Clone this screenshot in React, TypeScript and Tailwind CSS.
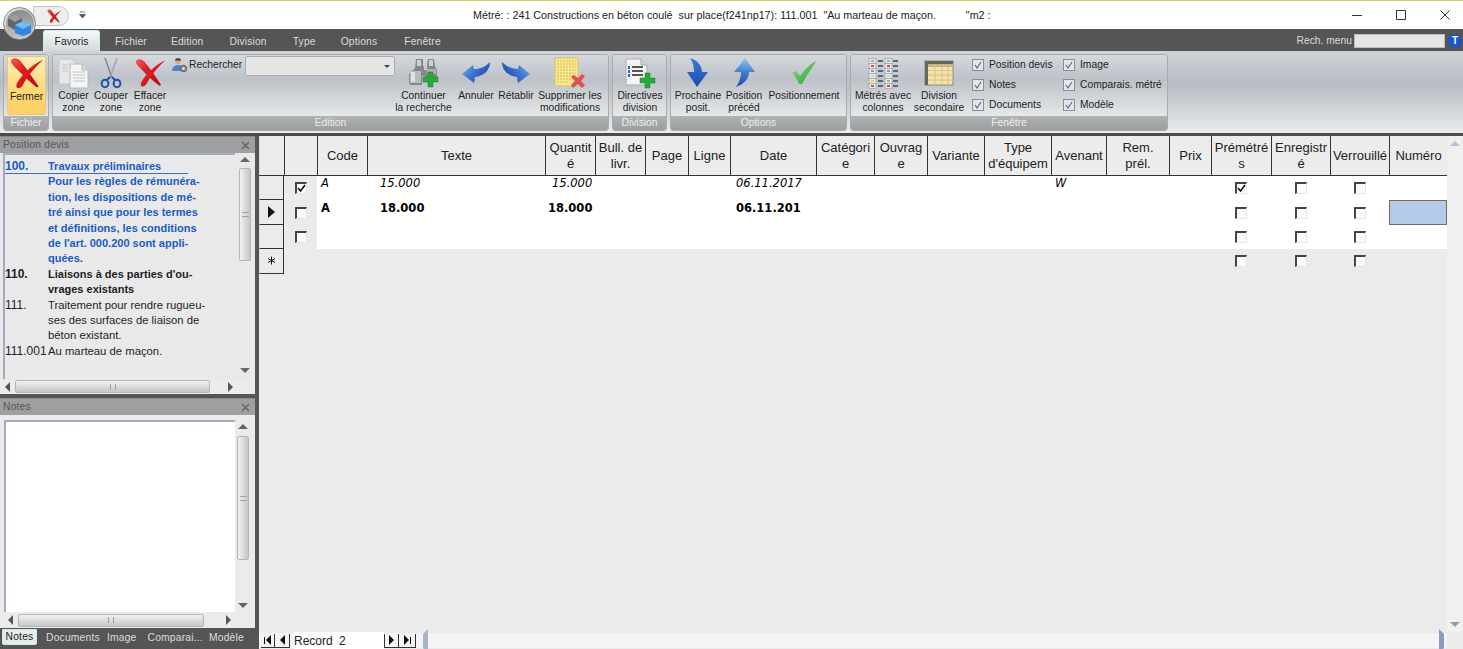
import { useId } from 'react';
import type { ReactNode } from 'react';

const GRID_COLS = 'grid-cols-[25px_33px_50px_178px_50px_50px_43px_42px_86px_58px_53px_57px_67px_55px_63px_42px_60px_59px_59px_58px]';

function RedX({ size = 38 }: { size?: number }) {
  const id = useId();
  return (
    <svg width={size} height={size} viewBox="0 0 38 38">
      <defs>
        <linearGradient id={id} x1="0" y1="0" x2="1" y2="1">
          <stop offset="0" stopColor="#ee5a5e" />
          <stop offset="0.45" stopColor="#dc1820" />
          <stop offset="1" stopColor="#b00e16" />
        </linearGradient>
      </defs>
      <path d="M1 4C3 0 9 1 12 5c5 6 10 13 20 28l-2 1C22 28 14 20 8 14 5 11 1 8 1 4z" fill={`url(#${id})`} />
      <path d="M37 3C28 7 18 15 12 23c-3 4-5 7-5 10 1 3 5 2 7-1C17 26 23 16 37 3z" fill={`url(#${id})`} />
    </svg>
  );
}

function CopyIcon() {
  return (
    <svg width="32" height="32" viewBox="0 0 32 32">
      <path d="M1 2h13l3 3v22H1z" fill="#e6e7e8" stroke="#c4c6c8" />
      <path d="M12 7h12l6 6v18H12z" fill="#f4f4f4" stroke="#b8babc" />
      <path d="M24 7v6h6" fill="#d8dadc" stroke="#b8babc" />
      <path d="M15 15h12M15 18h12M15 21h12M15 24h12M4 8h6M4 11h6M4 14h6" stroke="#c0c2c4" />
    </svg>
  );
}

function ScissorsIcon() {
  return (
    <svg width="24" height="32" viewBox="0 0 24 32">
      <path d="M6 1l7 20M18 1l-7 20" stroke="#a8abae" strokeWidth="1.8" fill="none" />
      <path d="M6 1l7 20" stroke="#606366" strokeWidth="0.6" />
      <ellipse cx="6" cy="26.5" rx="3.4" ry="3.8" fill="none" stroke="#1f4fa8" strokeWidth="2" />
      <ellipse cx="18" cy="26.5" rx="3.4" ry="3.8" fill="none" stroke="#1f4fa8" strokeWidth="2" />
      <path d="M8 23l3-3M16 23l-3-3" stroke="#1f4fa8" strokeWidth="1.8" />
    </svg>
  );
}

function SearchPerson() {
  return (
    <svg width="16" height="16" viewBox="0 0 16 16">
      <circle cx="6" cy="4" r="3" fill="#d9a77c" />
      <path d="M3 3.5c0-3 6-3 6 0z" fill="#3c3c3c" />
      <path d="M0 14c0-4 3-6 6-6s5 2 5 3v3z" fill="#4c84c8" />
      <circle cx="11.5" cy="11.5" r="3.2" fill="#8d9095" stroke="#55585c" />
      <circle cx="11.5" cy="11.5" r="1.2" fill="#e4e4e4" />
    </svg>
  );
}

function Plus({ x, y, s = 1 }: { x: number; y: number; s?: number }) {
  return <path transform={`translate(${x} ${y}) scale(${s})`} d="M5 0h5v5h5v5h-5v5H5v-5H0V5h5z" fill="#2aa83a" stroke="#1b7c28" strokeWidth="0.5" />;
}

function BinocularsIcon() {
  return (
    <svg width="32" height="30" viewBox="0 0 32 30">
      <path d="M8 1h7v6l1 3v2h3V7l1-6h6l1 7 2 4v8H17v-2h-3v9H2l-1-3v-8l6-6z" fill="#85888b" />
      <path d="M9 2h4v6H9zM21 2h4v6h-4z" fill="#cfd1d3" />
      <path d="M2 13h11v12H2z" fill="#b8bbbd" />
      <path d="M3 14h4v10H3z" fill="#dfe1e2" />
      <path d="M19 11h9v5h-9z" fill="#b0b3b5" />
      <Plus x={15} y={14} />
    </svg>
  );
}

function SwooshArrow({ flip = false }: { flip?: boolean }) {
  const id = useId();
  return (
    <svg width="30" height="24" viewBox="0 0 30 24" className={flip ? '-scale-x-100' : ''}>
      <defs>
        <linearGradient id={id} x1="0" y1="0" x2="1" y2="0.6">
          <stop offset="0" stopColor="#7cb0ea" />
          <stop offset="0.55" stopColor="#3a72cc" />
          <stop offset="1" stopColor="#1a48a8" />
        </linearGradient>
      </defs>
      <path d="M1 13L12 4l1 4c6 0 11-2 16-7 0 8-6 14-15 15l-1 6z" fill={`url(#${id})`} />
    </svg>
  );
}

function NoteIcon() {
  return (
    <svg width="32" height="32" viewBox="0 0 32 32">
      <path d="M1 1h23v28H1z" fill="#f8e690" stroke="#d8c060" />
      <path d="M3 4h19M3 7h19M3 10h19M3 13h19M3 16h19M3 19h17M3 22h14M3 25h12" stroke="#dcb850" strokeDasharray="2 1" />
      <path d="M17 20l3-2 4 3 4-4 3 2-4 5 4 4-3 3-4-4-5 4-2-3 4-4z" fill="#dc5058" />
    </svg>
  );
}

function DirectiveIcon() {
  return (
    <svg width="32" height="32" viewBox="0 0 32 32">
      <path d="M2 2h15l6 6v20H2z" fill="#f4f4f4" stroke="#a8aaac" />
      <path d="M17 2v6h6" fill="#cfd1d3" stroke="#a8aaac" />
      <path d="M8 10h11M8 14h11M8 18h11" stroke="#222" strokeWidth="1.6" />
      <path d="M4 9h2v3H4zM4 13h2v3H4zM4 17h2v3H4z" fill="#2468c8" />
      <Plus x={16} y={16} />
    </svg>
  );
}

function DownArrow() {
  const id = useId();
  return (
    <svg width="24" height="30" viewBox="0 0 24 30">
      <defs>
        <linearGradient id={id} x1="0" y1="0" x2="0" y2="1">
          <stop offset="0" stopColor="#3f7cd0" />
          <stop offset="1" stopColor="#1a4cb0" />
        </linearGradient>
      </defs>
      <path d="M4 0c7 2 12 7 12 14h6L11 29 1 14h7C8 9 7 4 4 0z" fill={`url(#${id})`} />
    </svg>
  );
}

function UpArrow() {
  const id = useId();
  return (
    <svg width="24" height="30" viewBox="0 0 24 30">
      <defs>
        <linearGradient id={id} x1="0" y1="0" x2="0" y2="1">
          <stop offset="0" stopColor="#9cc4f0" />
          <stop offset="0.5" stopColor="#3f7cd0" />
          <stop offset="1" stopColor="#1a4cb0" />
        </linearGradient>
      </defs>
      <path d="M13 0l10 14h-6c0 7-5 12-13 15 3-4 5-9 5-15H2z" fill={`url(#${id})`} />
    </svg>
  );
}

function CheckIcon() {
  const id = useId();
  return (
    <svg width="26" height="26" viewBox="0 0 26 26">
      <defs>
        <linearGradient id={id} x1="0" y1="0" x2="1" y2="1">
          <stop offset="0" stopColor="#98e088" />
          <stop offset="1" stopColor="#18a030" />
        </linearGradient>
      </defs>
      <path d="M1 13l4-2 4 5C13 10 18 5 25 1c-1 3-2 3-4 7-3 4-7 10-10 16H8C6 19 4 16 1 13z" fill={`url(#${id})`} />
    </svg>
  );
}

function ColumnsIcon() {
  const colors = ['#8ac878', '#e04848', '#68a0e0', '#e8d860', '#e8d060', '#e04848'];
  const colors2 = ['#8ac878', '#e04848', '#68a0e0', '#e8d860', '#8ac878', '#e04848'];
  return (
    <svg width="30" height="31" viewBox="0 0 30 31">
      {colors.map((c, i) => (
        <g key={i}>
          <rect x="1" y={i * 5 + 0.5} width="7" height="5" fill="#e8eaee" stroke="#9a9ea8" strokeWidth="0.7" />
          <rect x="3" y={i * 5 + 2} width="3" height="2" fill={c} />
          <rect x="10" y={i * 5 + 2} width="5" height="2" fill="#5c6878" />
          <rect x="17" y={i * 5 + 0.5} width="7" height="5" fill="#e8eaee" stroke="#9a9ea8" strokeWidth="0.7" />
          <rect x="19" y={i * 5 + 2} width="3" height="2" fill={colors2[i]} />
          <rect x="25" y={i * 5 + 2} width="5" height="2" fill="#5c6878" />
        </g>
      ))}
    </svg>
  );
}

function TableIcon() {
  return (
    <svg width="30" height="26" viewBox="0 0 30 26">
      <rect x="1" y="1" width="28" height="24" fill="#f6e2ac" stroke="#8a8a80" />
      <rect x="1" y="1" width="28" height="3" fill="#66665f" />
      <rect x="1" y="4" width="28" height="3" fill="#c8b488" />
      <rect x="1" y="4" width="3" height="21" fill="#66665f" />
      <path d="M4 10.5h25M4 15h25M4 20h25M11 5v20M18 5v20M24 5v20" stroke="#d8c088" />
    </svg>
  );
}

function Logo() {
  return (
    <div className="absolute left-[3px] top-[7px] w-[33px] h-[33px] rounded-full bg-gradient-to-br from-[#f4f4f4] via-[#b8bbbe] to-[#f8f8f8] border border-[#888] flex items-center justify-center">
      <div className="w-[28px] h-[28px] rounded-full bg-gradient-to-b from-[#8a8c8e] to-[#c0c2c4] flex items-center justify-center">
        <svg width="26" height="26" viewBox="0 0 26 26">
          <path d="M1 7l7-4 7 4v8l-7 4-7-4z" fill="#63666a" />
          <path d="M1 7l7-4 7 4-7 4z" fill="#9a9da0" />
          <path d="M8 14l8-4 8 4v8l-8 3-8-3z" fill="#2f86dc" />
          <path d="M8 14l8-4 8 4-8 4z" fill="#70bcf6" />
        </svg>
      </div>
    </div>
  );
}

function RibbonButton({ w, icon, lines }: { w: string; icon: ReactNode; lines: string[] }) {
  return (
    <div className={`${w} h-[60px] shrink-0 flex flex-col items-center`}>
      <div className="h-[34px] flex items-center justify-center">{icon}</div>
      <div className="text-center leading-[12px] whitespace-nowrap">
        {lines.map((l) => (
          <div key={l}>{l}</div>
        ))}
      </div>
    </div>
  );
}

function RibbonGroup({ w, label, children }: { w: string; label: string; children: ReactNode }) {
  return (
    <div className={`${w} h-[77px] shrink-0 flex flex-col rounded-[3px] border border-[#a9acaf] overflow-hidden`}>
      <div className="h-[61px] flex pt-[1px] pl-[3px] bg-gradient-to-b from-[#d5d8dc] via-[#bdc1c8] via-40% to-[#e6e9e9]">{children}</div>
      <div className="h-[14px] bg-gradient-to-b from-[#b0b2b4] to-[#9c9ea0] text-[#eceeee] text-center leading-[14px]">{label}</div>
    </div>
  );
}

function RibbonCheck({ label }: { label: string }) {
  return (
    <div className="h-[20px] flex items-center gap-[5px] whitespace-nowrap">
      <span className="w-[12px] h-[12px] border border-[#8a8c90] bg-[#e4e6ea] flex items-center justify-center">
        <svg width="8" height="8" viewBox="0 0 8 8">
          <path d="M1 4l2 3 4-6" fill="none" stroke="#5a6a98" strokeWidth="1.2" />
        </svg>
      </span>
      <span>{label}</span>
    </div>
  );
}

function Tri({ dir, color = 'border-[#555]' }: { dir: 'up' | 'down' | 'left' | 'right'; color?: string }) {
  if (dir === 'up') return <span className={`w-0 h-0 border-x-[5px] border-x-transparent border-b-[5px] ${color}`} />;
  if (dir === 'down') return <span className={`w-0 h-0 border-x-[5px] border-x-transparent border-t-[5px] ${color}`} />;
  if (dir === 'left') return <span className={`w-0 h-0 border-y-[5px] border-y-transparent border-r-[5px] ${color}`} />;
  return <span className={`w-0 h-0 border-y-[5px] border-y-transparent border-l-[5px] ${color}`} />;
}

function VScroll({ thumbTop, thumbH, className }: { thumbTop: string; thumbH: string; className: string }) {
  return (
    <div className={`flex flex-col items-center justify-between ${className}`}>
      <div className="h-[13px] flex items-center justify-center shrink-0"><Tri dir="up" color="border-b-[#666]" /></div>
      <div className="flex-1 w-full flex flex-col">
        <div className={thumbTop} />
        <div className={`${thumbH} mx-[1px] rounded-[2px] border border-[#b4b6b8] bg-gradient-to-r from-[#f2f2f2] to-[#c4c6c8] flex items-center justify-center`}>
          <span className="w-[7px] h-[5px] border-y border-[#a0a2a4]" />
        </div>
      </div>
      <div className="h-[13px] flex items-center justify-center shrink-0"><Tri dir="down" color="border-t-[#666]" /></div>
    </div>
  );
}

function HScroll({ thumbW, pad, h }: { thumbW: string; pad: string; h: string }) {
  return (
    <div className={`${h} flex items-center bg-[#ebebeb] ${pad}`}>
      <Tri dir="left" color="border-r-[#555]" />
      <div className={`${thumbW} h-[13px] ml-[5px] rounded-[2px] border border-[#b4b6b8] bg-gradient-to-b from-[#f2f2f2] to-[#c4c6c8] flex items-center justify-center`}>
        <span className="w-[6px] h-[6px] border-x border-[#9c9ea0]" />
      </div>
      <div className="flex-1 flex justify-center"><Tri dir="right" color="border-l-[#555]" /></div>
    </div>
  );
}

function PaneHeader({ title }: { title: string }) {
  return (
    <div className="h-[17px] shrink-0 bg-[#9d9fa0] border-t border-[#87898a] flex items-center justify-between pl-[3px] pr-[5px] text-[#565656] text-[10.3px] tracking-[0.2px]">
      <span>{title}</span>
      <svg width="9" height="9" viewBox="0 0 9 9">
        <path d="M1 1l7 7M8 1L1 8" stroke="#5e6062" strokeWidth="1.3" />
      </svg>
    </div>
  );
}

function PosLine({ n, text, cls }: { n?: string; text: string; cls?: string }) {
  return (
    <div className={`grid grid-cols-[43px_1fr] h-[15.4px] leading-[15.4px] whitespace-nowrap ${cls ?? ''}`}>
      <span className="text-[12px]">{n}</span>
      <span>{text}</span>
    </div>
  );
}

function GridCheck({ checked = false }: { checked?: boolean }) {
  return (
    <span className="w-[12px] h-[12px] bg-[#fbfbfb] border-l-2 border-t-2 border-l-[#444] border-t-[#444] border-r border-b border-r-[#e4e4e4] border-b-[#e4e4e4] flex items-center justify-center">
      {checked && (
        <svg width="9" height="9" viewBox="0 0 9 9">
          <path d="M1 4l2.5 3L8 1" fill="none" stroke="#111" strokeWidth="1.6" />
        </svg>
      )}
    </span>
  );
}

const headers: [string, string?][] = [
  ['Code'], ['Texte'], ['Quantit', 'é'], ['Bull. de', 'livr.'], ['Page'], ['Ligne'], ['Date'],
  ['Catégori', 'e'], ['Ouvrag', 'e'], ['Variante'], ['Type', "d'équipem"], ['Avenant'], ['Rem.', 'prél.'],
  ['Prix'], ['Prémétré', 's'], ['Enregistr', 'é'], ['Verrouillé'], ['Numéro'],
];

function HeaderCell({ a, b }: { a?: string; b?: string }) {
  return (
    <div className="h-[39px] overflow-hidden border-l border-l-[#333] flex flex-col items-center justify-center leading-[16px] whitespace-nowrap text-[13px] text-[#222] bg-[#ececec]">
      <div>{a}</div>
      {b && <div>{b}</div>}
    </div>
  );
}

function RowHead({ mark }: { mark?: 'arrow' | 'star' }) {
  return (
    <div className="h-[24.4px] border-b border-b-[#333] border-r border-r-[#333] border-l border-l-[#ddd] bg-[#ebebeb] flex items-center justify-center">
      {mark === 'arrow' && <span className="w-0 h-0 border-y-[6px] border-y-transparent border-l-[7px] border-l-[#111]" />}
      {mark === 'star' && (
        <svg width="9" height="9" viewBox="0 0 9 9">
          <path d="M4.5 0.5v8M1 2.5l7 4M8 2.5l-7 4" stroke="#111" />
        </svg>
      )}
    </div>
  );
}

function DataRow({ mark, row, check, bold, italic, sel, blank }: {
  mark?: 'arrow' | 'star'; row?: string[]; check?: boolean; bold?: boolean; italic?: boolean; sel?: boolean; blank?: boolean;
}) {
  const text = `font-['DejaVu_Sans',sans-serif] text-[11.5px] text-black leading-[15px] whitespace-nowrap overflow-hidden ${bold ? 'font-bold pt-[1px]' : ''} ${italic ? 'italic text-[#222]' : ''}`;
  const bg = blank ? 'bg-[#ebebeb]' : 'bg-white';
  return (
    <div className={`grid ${GRID_COLS} h-[24.4px]`}>
      <RowHead mark={mark} />
      <div className="bg-[#ebebeb] flex items-center justify-center">
        {!blank && <GridCheck checked={check} />}
      </div>
      <div className={`${bg} col-span-12 grid grid-cols-[50px_178px_50px_50px_43px_42px_86px_58px_53px_57px_67px_55px] ${text}`}>
        <div className="pl-[4px]">{row?.[0]}</div>
        <div className="pl-[13px]">{row?.[1]}</div>
        <div className={bold ? 'pl-[3px]' : 'pl-[7px]'}>{row?.[2]}</div>
        <div />
        <div />
        <div />
        <div className="pl-[6px]">{row?.[3]}</div>
        <div />
        <div />
        <div />
        <div />
        <div className="pl-[4px]">{row?.[4]}</div>
      </div>
      <div className={`${bg} col-span-2`} />
      <div className={`${bg} flex items-center justify-center`}><GridCheck checked={italic} /></div>
      <div className={`${bg} flex items-center justify-center`}><GridCheck /></div>
      <div className={`${bg} flex items-center justify-center`}><GridCheck /></div>
      <div className={bg}>
        {sel && <div className="h-full bg-[#b3cbe8] border border-[#7d6a55]" />}
      </div>
    </div>
  );
}

export default function App() {
  return (
    <div className="relative w-[1463px] h-[649px] overflow-hidden bg-[#ebebeb] font-['Liberation_Sans',sans-serif] text-[10.3px] text-[#1e1e1e]">
      {/* title bar */}
      <div className="h-[29px] bg-white border-t-[1px] border-t-[#dccf6a] flex items-center pl-[79px] pr-[13px]">
        <svg width="7" height="8" viewBox="0 0 7 8" className="mr-[387px]">
          <path d="M1 1h5M0.5 3.5h6L3.5 7z" stroke="#555" fill="#555" strokeWidth="0.8" />
        </svg>
        <div className="text-[10.75px] text-[#222] whitespace-pre">Métré: : 241 Constructions en béton coulé  sur place(f241np17): 111.001  "Au marteau de maçon.          "m2 :</div>
        <div className="ml-auto flex items-center gap-[34px]">
          <svg width="10" height="10" viewBox="0 0 10 10"><path d="M0 5.5h10" stroke="#333" /></svg>
          <svg width="10" height="10" viewBox="0 0 10 10"><path d="M0.5 0.5h9v9h-9z" fill="none" stroke="#333" /></svg>
          <svg width="10" height="10" viewBox="0 0 10 10"><path d="M0.5 0.5l9 9M9.5 0.5l-9 9" stroke="#333" /></svg>
        </div>
      </div>

      <div className="absolute left-[33px] top-[6px] w-[36px] h-[20px] rounded-r-full border border-[#c4c6c8] bg-[#eeeeee] flex items-center justify-center pl-[7px]">
        <RedX size={15} />
      </div>
      <Logo />

      {/* tab strip */}
      <div className="h-[22px] bg-[#555555] flex items-end pl-[43px] pr-[1px] text-[#dcdcdc] text-[10.3px]">
        <div className="w-[57px] h-[21px] rounded-t-[3px] border border-b-0 border-[#c8ecf4] bg-gradient-to-b from-[#f6f8f8] to-[#d4d8dc] text-[#222] text-center leading-[21px]">Favoris</div>
        <div className="h-[21px] flex leading-[23px] tracking-[0.15px]">
          <span className="ml-[15px]">Fichier</span>
          <span className="ml-[24px]">Edition</span>
          <span className="ml-[26px]">Division</span>
          <span className="ml-[26px]">Type</span>
          <span className="ml-[25px]">Options</span>
          <span className="ml-[27px]">Fenêtre</span>
        </div>
        <div className="ml-auto h-[21px] flex items-center">
          <span className="mr-[2px]">Rech. menu</span>
          <span className="w-[91px] h-[14px] bg-[#e6e6e6] border border-[#bcbcbc]" />
          <span className="ml-[3px] w-[14px] h-[14px] rounded-full bg-[#1a56c8] text-white font-bold text-[10px] leading-[14px] text-center">T</span>
        </div>
      </div>

      {/* ribbon */}
      <div className="h-[82px] flex gap-[3px] pl-[3px] pt-[3px] bg-gradient-to-b from-[#cfd2d6] via-[#b8bcc3] via-40% to-[#e9eded]">
        <RibbonGroup w="w-[46px]" label="Fichier">
          <div className="w-[39px] h-[59px] rounded-[2px] border border-[#e8c878] bg-gradient-to-b from-[#fdeeb8] via-[#fdd873] via-60% to-[#fbd064] flex flex-col items-center">
            <div className="h-[33px] flex items-center"><RedX size={34} /></div>
            <div className="leading-[13px]">Fermer</div>
          </div>
        </RibbonGroup>
        <RibbonGroup w="w-[557px]" label="Edition">
          <RibbonButton w="w-[35px]" icon={<CopyIcon />} lines={['Copier', 'zone']} />
          <RibbonButton w="w-[40px]" icon={<ScissorsIcon />} lines={['Couper', 'zone']} />
          <RibbonButton w="w-[38px]" icon={<RedX size={31} />} lines={['Effacer', 'zone']} />
          <div className="w-[226px] h-[24px] shrink-0 flex items-start">
            <div className="h-[17px] flex items-center gap-[1px] w-[76px] pl-[3px] whitespace-nowrap">
              <SearchPerson />
              <span>Rechercher</span>
            </div>
            <div className="w-[150px] h-[20px] bg-[#e6e6e6] border border-[#aaacae] rounded-[2px] flex items-center justify-end pr-[4px]">
              <span className="w-0 h-0 border-x-[3px] border-x-transparent border-t-[3px] border-t-[#444]" />
            </div>
          </div>
          <RibbonButton w="w-[57px]" icon={<BinocularsIcon />} lines={['Continuer', 'la recherche']} />
          <RibbonButton w="w-[48px]" icon={<SwooshArrow />} lines={['Annuler']} />
          <RibbonButton w="w-[32px]" icon={<SwooshArrow flip />} lines={['Rétablir']} />
          <RibbonButton w="w-[76px]" icon={<NoteIcon />} lines={['Supprimer les', 'modifications']} />
        </RibbonGroup>
        <RibbonGroup w="w-[55px]" label="Division">
          <RibbonButton w="w-[48px]" icon={<DirectiveIcon />} lines={['Directives', 'division']} />
        </RibbonGroup>
        <RibbonGroup w="w-[177px]" label="Options">
          <RibbonButton w="w-[48px]" icon={<DownArrow />} lines={['Prochaine', 'posit.']} />
          <RibbonButton w="w-[44px]" icon={<UpArrow />} lines={['Position', 'précéd']} />
          <RibbonButton w="w-[76px]" icon={<CheckIcon />} lines={['Positionnement']} />
        </RibbonGroup>
        <RibbonGroup w="w-[318px]" label="Fenêtre">
          <RibbonButton w="w-[58px]" icon={<ColumnsIcon />} lines={['Métrés avec', 'colonnes']} />
          <RibbonButton w="w-[54px]" icon={<TableIcon />} lines={['Division', 'secondaire']} />
          <div className="ml-[6px] w-[91px] -mt-px">
            <RibbonCheck label="Position devis" />
            <RibbonCheck label="Notes" />
            <RibbonCheck label="Documents" />
          </div>
          <div className="-mt-px">
            <RibbonCheck label="Image" />
            <RibbonCheck label="Comparais. métré" />
            <RibbonCheck label="Modèle" />
          </div>
        </RibbonGroup>
      </div>

      <div className="h-[3px] bg-[#4c4c4c]" />

      {/* main area */}
      <div className="h-[513px] flex">
        <div className="w-[255px] shrink-0 flex flex-col bg-[#e9e9e9]">
          <PaneHeader title="Position devis" />
          <div className="h-[226px] flex pl-[3px] pr-[3px]">
            <div className="w-[232px] border-l-2 border-t-2 border-[#a4abc0] text-[11.3px] pt-[4px]">
              <div className="text-[#1a5cc4] font-bold text-[11px]">
                <PosLine n="100." text="Travaux préliminaires" cls="border-b border-[#3c6cc0] w-[183px]" />
                <PosLine text="Pour les règles de rémunéra-" />
                <PosLine text="tion, les dispositions de mé-" />
                <PosLine text="tré ainsi que pour les termes" />
                <PosLine text="et définitions, les conditions" />
                <PosLine text="de l'art. 000.200 sont appli-" />
                <PosLine text="quées." />
              </div>
              <div className="font-bold text-[11px]">
                <PosLine n="110." text="Liaisons à des parties d'ou-" />
                <PosLine text="vrages existants" />
              </div>
              <PosLine n="111." text="Traitement pour rendre rugueu-" />
              <PosLine text="ses des surfaces de liaison de" />
              <PosLine text="béton existant." />
              <PosLine n="111.001" text="Au marteau de maçon." />
            </div>
            <VScroll thumbTop="h-[2px]" thumbH="h-[93px]" className="w-[14px] h-full ml-[3px] pb-[2px]" />
          </div>
          <HScroll thumbW="w-[195px]" pad="pl-[5px] pr-[5px]" h="h-[15px]" />
          <div className="h-[4px] bg-[#555]" />
          <PaneHeader title="Notes" />
          <div className="h-[197px] flex pl-[4px] pr-[4px] pt-[5px] bg-[#ebebeb]">
            <div className="w-[231px] bg-white border-l-2 border-t-2 border-[#a4abc0]" />
            <VScroll thumbTop="h-[3px]" thumbH="h-[124px]" className="w-[14px] h-full ml-[1px]" />
          </div>
          <HScroll thumbW="w-[186px]" pad="pl-[8px] pr-[3px]" h="h-[16px]" />
          <div className="flex-1 bg-[#555] flex items-start pl-[2px] text-[#dedede] tracking-[0.2px]">
            <span className="w-[35px] h-[16px] mt-[1px] bg-[#e8ecec] border border-[#c8ecf4] rounded-b-[2px] text-[#222] text-center leading-[14px]">Notes</span>
            <span className="ml-[9px] mt-[2px]">Documents</span>
            <span className="ml-[7px] mt-[2px]">Image</span>
            <span className="ml-[11px] mt-[2px]">Comparai...</span>
            <span className="ml-[6px] mt-[2px]">Modèle</span>
          </div>
        </div>
        <div className="w-[4px] shrink-0 bg-[#555]" />

        {/* data grid */}
        <div className="flex-1 flex flex-col min-w-0 bg-[#ebebeb]">
          <div className="flex-1 flex min-h-0">
            <div className="w-[1188px] shrink-0">
              <div className={`grid ${GRID_COLS} border-b border-b-[#333]`}>
                <div className="h-[39px] border-l border-l-[#ddd]" />
                <HeaderCell />
                {headers.map(([a, b]) => (
                  <HeaderCell key={a} a={a} b={b} />
                ))}
              </div>
              <DataRow row={['A', '15.000', '15.000', '06.11.2017', 'W']} check italic />
              <DataRow mark="arrow" row={['A', '18.000', '18.000', '06.11.201']} bold sel />
              <DataRow />
              <DataRow mark="star" blank />
            </div>
            <div className="flex-1 flex flex-col items-center justify-between py-[5px] bg-[#f0f0f0]">
              <Tri dir="up" color="border-b-[#b8c0cc]" />
              <Tri dir="down" color="border-t-[#8a9cc0]" />
            </div>
          </div>
          <div className="h-[17px] shrink-0 flex items-center bg-[#ebebeb] text-[12px] text-[#222]">
            <div className="w-[1188px] h-[15px] flex items-center bg-[#f4f4f4] pl-[2px]">
              <span className="w-[14px] h-[14px] border-r border-b border-[#333] flex items-center justify-center gap-[1px]">
                <span className="w-[1px] h-[7px] bg-black" /><Tri dir="left" color="border-r-[#111]" />
              </span>
              <span className="w-[15px] h-[14px] border-r border-b border-[#333] flex items-center justify-center"><Tri dir="left" color="border-r-[#111]" /></span>
              <span className="ml-[4px] w-[41px] bg-white">Record</span>
              <span className="w-[49px] bg-white pl-[4px]">2</span>
              <span className="w-[15px] h-[14px] border-r border-b border-l border-[#333] flex items-center justify-center"><Tri dir="right" color="border-l-[#111]" /></span>
              <span className="w-[17px] h-[14px] border-r border-b border-[#333] flex items-center justify-center gap-[1px]">
                <Tri dir="right" color="border-l-[#111]" /><span className="w-[1px] h-[7px] bg-black" />
              </span>
              <span className="ml-[7px]"><Tri dir="left" color="border-r-[#a8b4c8]" /></span>
              <span className="ml-auto mr-[3px]"><Tri dir="right" color="border-l-[#8a9cc0]" /></span>
            </div>
          </div>
        </div>
      </div>
    </div>
  );
}
